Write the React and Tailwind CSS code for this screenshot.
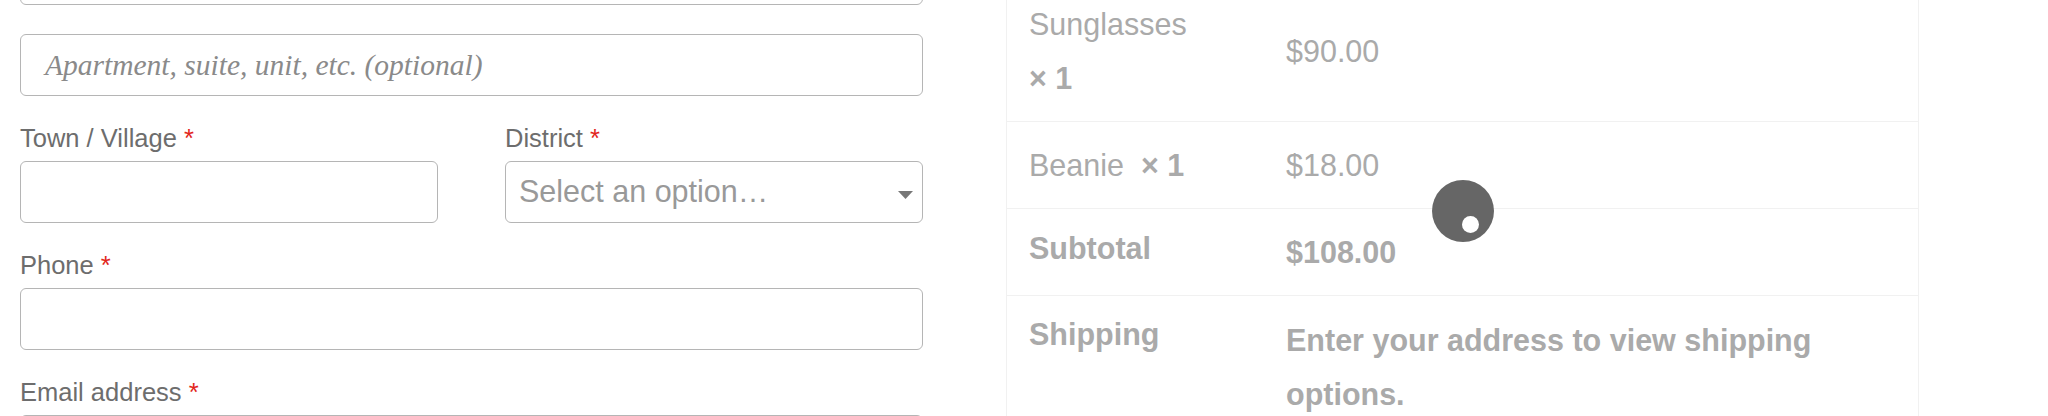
import React from "react";

function Label({ children }) {
  return (
    <div className="h-[36px] leading-[36px] text-[25.5px] text-[#6d6d6d] mb-[5px] whitespace-nowrap">
      {children} <span className="text-[#e2261c]">*</span>
    </div>
  );
}

function Input({ className = "", children }) {
  return (
    <div
      className={
        "h-[62px] border-[1.5px] border-[#b5b5b5] rounded-[6px] bg-white flex items-center " +
        className
      }
    >
      {children}
    </div>
  );
}

export default function App() {
  return (
    <div className="relative w-[2048px] h-[416px] overflow-hidden bg-white font-['Liberation_Sans',Arial,sans-serif]">
      <div className="flex items-start">
        {/* Left: billing form */}
        <div className="ml-[20px] w-[903px] mt-[-57px] flex flex-col shrink-0">
          <Input />
          <Input className="mt-[29px] pl-[24px]">
            <span className="font-['Liberation_Serif',serif] italic text-[29.5px] text-[#8a8a8a] whitespace-nowrap">
              Apartment, suite, unit, etc. (optional)
            </span>
          </Input>
          <div className="mt-[24px] grid grid-cols-[418px_418px] gap-x-[67px]">
            <div>
              <Label>Town / Village</Label>
              <Input />
            </div>
            <div>
              <Label>District</Label>
              <Input className="pl-[13px] pr-[9px] justify-between">
                <span className="text-[30.5px] text-[#999999] whitespace-nowrap">Select an option…</span>
                <svg width="15" height="8" viewBox="0 0 15 8" className="mt-[6px]">
                  <path d="M0 0 L15 0 L7.5 8 Z" fill="#777777" />
                </svg>
              </Input>
            </div>
          </div>
          <div className="mt-[24px]">
            <Label>Phone</Label>
            <Input />
          </div>
          <div className="mt-[24px]">
            <Label>Email address</Label>
            <Input />
          </div>
        </div>

        {/* Right: order review */}
        <div className="ml-[83px] w-[913px] mt-[-19px] shrink-0 border-x border-[#f1f1f1] text-[30.5px] leading-[54px] text-[#aaaaaa]">
          <div className="grid grid-cols-[257px_1fr] border-b border-[#f1f1f1]">
            <div className="px-[22px] py-[16px]">
              Sunglasses
              <br />
              <strong className="font-bold">× 1</strong>
            </div>
            <div className="px-[22px] flex items-center">$90.00</div>
          </div>
          <div className="grid grid-cols-[257px_1fr] border-b border-[#f1f1f1]">
            <div className="px-[22px] py-[16px] whitespace-nowrap">
              Beanie&nbsp; <strong className="font-bold">× 1</strong>
            </div>
            <div className="px-[22px] py-[16px]">$18.00</div>
          </div>
          <div className="grid grid-cols-[257px_1fr] border-b border-[#f1f1f1] font-bold">
            <div className="px-[22px] pt-[12px] pb-[20px]">Subtotal</div>
            <div className="px-[22px] pt-[16px] pb-[16px]">$108.00</div>
          </div>
          <div className="grid grid-cols-[257px_1fr] font-bold">
            <div className="px-[22px] pt-[11px] pb-[16px]">Shipping</div>
            <div className="px-[22px] pt-[17px] pb-[16px]">
              Enter your address to view shipping options.
            </div>
          </div>
        </div>
      </div>

      {/* Loading spinner overlay */}
      <div className="absolute left-[1432px] top-[180px] w-[62px] h-[62px] rounded-full bg-[#666666]">
        <div className="absolute left-[30px] top-[36px] w-[17px] h-[17px] rounded-full bg-white" />
      </div>
    </div>
  );
}
